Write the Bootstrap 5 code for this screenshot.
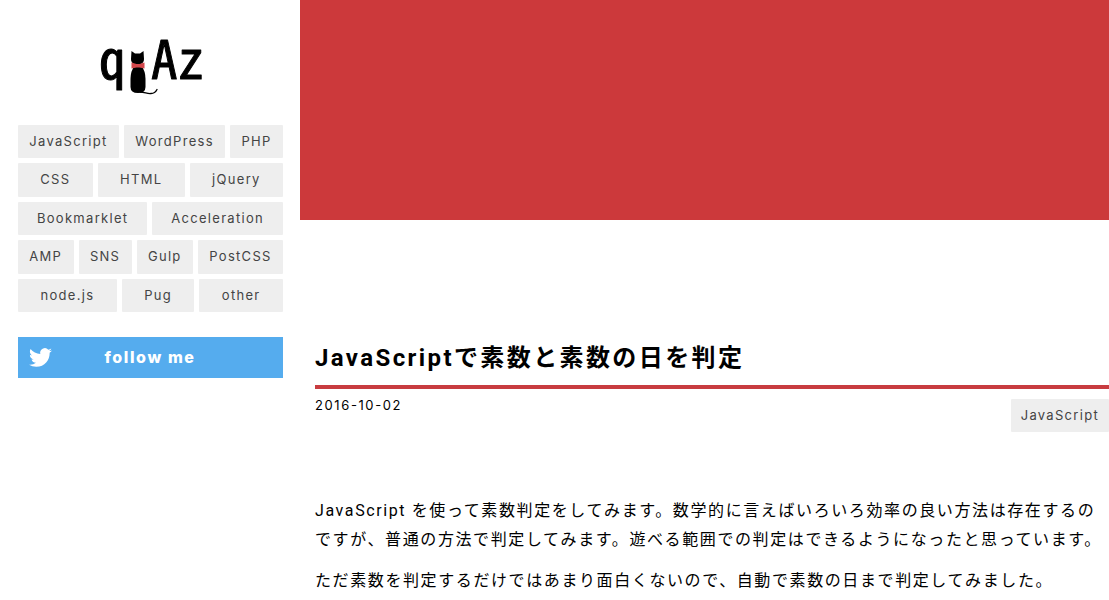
<!DOCTYPE html>
<html lang="ja">
<head>
<meta charset="utf-8">
<meta name="viewport" content="width=device-width, initial-scale=1">
<title>JavaScriptで素数と素数の日を判定 | qiAz</title>
<link href="https://cdn.jsdelivr.net/npm/bootstrap@5.3.0/dist/css/bootstrap.min.css" rel="stylesheet">
<style>
  body { font-family: Inter, "Noto Sans CJK JP", sans-serif; font-size: 16px; line-height: 1.8; letter-spacing: .1em; color: #000; background: #fff; }
  .sidebar { width: 300px; padding: 10px 17px 24px 18px; }
  .site-logo { height: 100px; margin-bottom: 15px; }
  .site-logo text { font: 400 53px "Noto Sans CJK JP", sans-serif; font-feature-settings: "hwid"; letter-spacing: 0; }
  .tag-list { gap: 5px; margin-bottom: 25px; }
  .tag { padding: 5px 10px; font-size: 13px; letter-spacing: .1em; text-align: center; text-decoration: none; color: #444; background: #eee; border-radius: 1px; }
  .follow { height: 41px; padding: 0 11px; font-weight: 800; color: #fff; background: #55acee; text-decoration: none; }
  .hero { height: 220px; background: #cc393b; }
  .post { padding: 120px 0 0 15px; }
  .post-title { margin: 0; padding-bottom: 9px; font-family: Roboto, "Noto Sans CJK JP", sans-serif; font-size: 24px; line-height: 36px; font-weight: 700; letter-spacing: .1em; border-bottom: 4px solid #c83c40; }
  .post-date { font-size: 13px; line-height: 32px; }
  .post-meta .tag { margin-top: 10px; }
  .post-body { padding-top: 65px; font-family: Roboto, "Noto Sans CJK JP", sans-serif; }
  .post-body p { margin-bottom: 12px; }
  .post-body p:last-child { margin-bottom: 0; }
</style>
</head>
<body>
<div class="d-flex">
  <aside class="sidebar flex-shrink-0">
    <a href="#" class="site-logo d-block text-center" aria-label="qiAz">
      <svg class="d-block mx-auto" width="120" height="100" viewBox="0 0 120 100">
        <g stroke="#000" stroke-width="1" stroke-linejoin="round"><text x="8" y="69">q</text><text x="60" y="69">Az</text></g>
        <path d="M40.500 41l3.500 2.500h5l3.500-2.500.5 8q0 3.500-3 5h-7q-3-1.500-3-5z"/>
        <path d="M44 55h6q4.500 6 4.500 14v8q0 6-7.500 6t-7.500-6v-8q0-8 4.500-14z"/>
        <path d="M49 82c5 0 7 2 11 1.500 3 0 5-2 6-4" fill="none" stroke="#000" stroke-width="1.300" stroke-linecap="round"/>
        <path d="M40.500 52.500l5 1.500h3l5-1.500v6l-5-1h-3l-5 1z" fill="#d3474b"/>
      </svg>
    </a>
    <nav class="tag-list d-flex flex-wrap">
      <a href="#" class="tag flex-fill">JavaScript</a>
      <a href="#" class="tag flex-fill">WordPress</a>
      <a href="#" class="tag flex-fill">PHP</a>
      <a href="#" class="tag flex-fill">CSS</a>
      <a href="#" class="tag flex-fill">HTML</a>
      <a href="#" class="tag flex-fill">jQuery</a>
      <a href="#" class="tag flex-fill">Bookmarklet</a>
      <a href="#" class="tag flex-fill">Acceleration</a>
      <a href="#" class="tag flex-fill">AMP</a>
      <a href="#" class="tag flex-fill">SNS</a>
      <a href="#" class="tag flex-fill">Gulp</a>
      <a href="#" class="tag flex-fill">PostCSS</a>
      <a href="#" class="tag flex-fill">node.js</a>
      <a href="#" class="tag flex-fill">Pug</a>
      <a href="#" class="tag flex-fill">other</a>
    </nav>
    <a href="#" class="follow d-flex align-items-center">
      <svg width="23" height="23" viewBox="0 0 24 24" fill="#fff" aria-hidden="true"><path d="M23.950 4.570a10 10 0 0 1-2.820.770 4.960 4.960 0 0 0 2.160-2.720c-.950.550-2 .960-3.130 1.180a4.920 4.920 0 0 0-8.380 4.480C7.690 8.090 4.070 6.130 1.640 3.160a4.820 4.820 0 0 0-.670 2.480c0 1.710.870 3.210 2.190 4.100a4.900 4.900 0 0 1-2.230-.620v.060a4.920 4.920 0 0 0 3.950 4.830 5 5 0 0 1-2.210.080 4.940 4.940 0 0 0 4.600 3.420A9.870 9.870 0 0 1 0 19.540a14 14 0 0 0 7.550 2.210c9.050 0 14-7.500 14-13.980 0-.210 0-.420-.020-.630a9.940 9.940 0 0 0 2.460-2.550z"/></svg>
      <span class="flex-fill text-center pe-4">follow me</span>
    </a>
  </aside>
  <main class="flex-fill">
    <div class="hero"></div>
    <article class="post">
      <h1 class="post-title">JavaScriptで素数と素数の日を判定</h1>
      <div class="post-meta d-flex justify-content-between align-items-start">
        <time class="post-date" datetime="2016-10-02">2016-10-02</time>
        <a href="#" class="tag">JavaScript</a>
      </div>
      <div class="post-body">
        <p>JavaScript を使って素数判定をしてみます。数学的に言えばいろいろ効率の良い方法は存在するのですが、普通の方法で判定してみます。遊べる範囲での判定はできるようになったと思っています。</p>
        <p>ただ素数を判定するだけではあまり面白くないので、自動で素数の日まで判定してみました。</p>
      </div>
    </article>
  </main>
</div>
<script src="https://cdn.jsdelivr.net/npm/bootstrap@5.3.0/dist/js/bootstrap.bundle.min.js"></script>
</body>
</html>
